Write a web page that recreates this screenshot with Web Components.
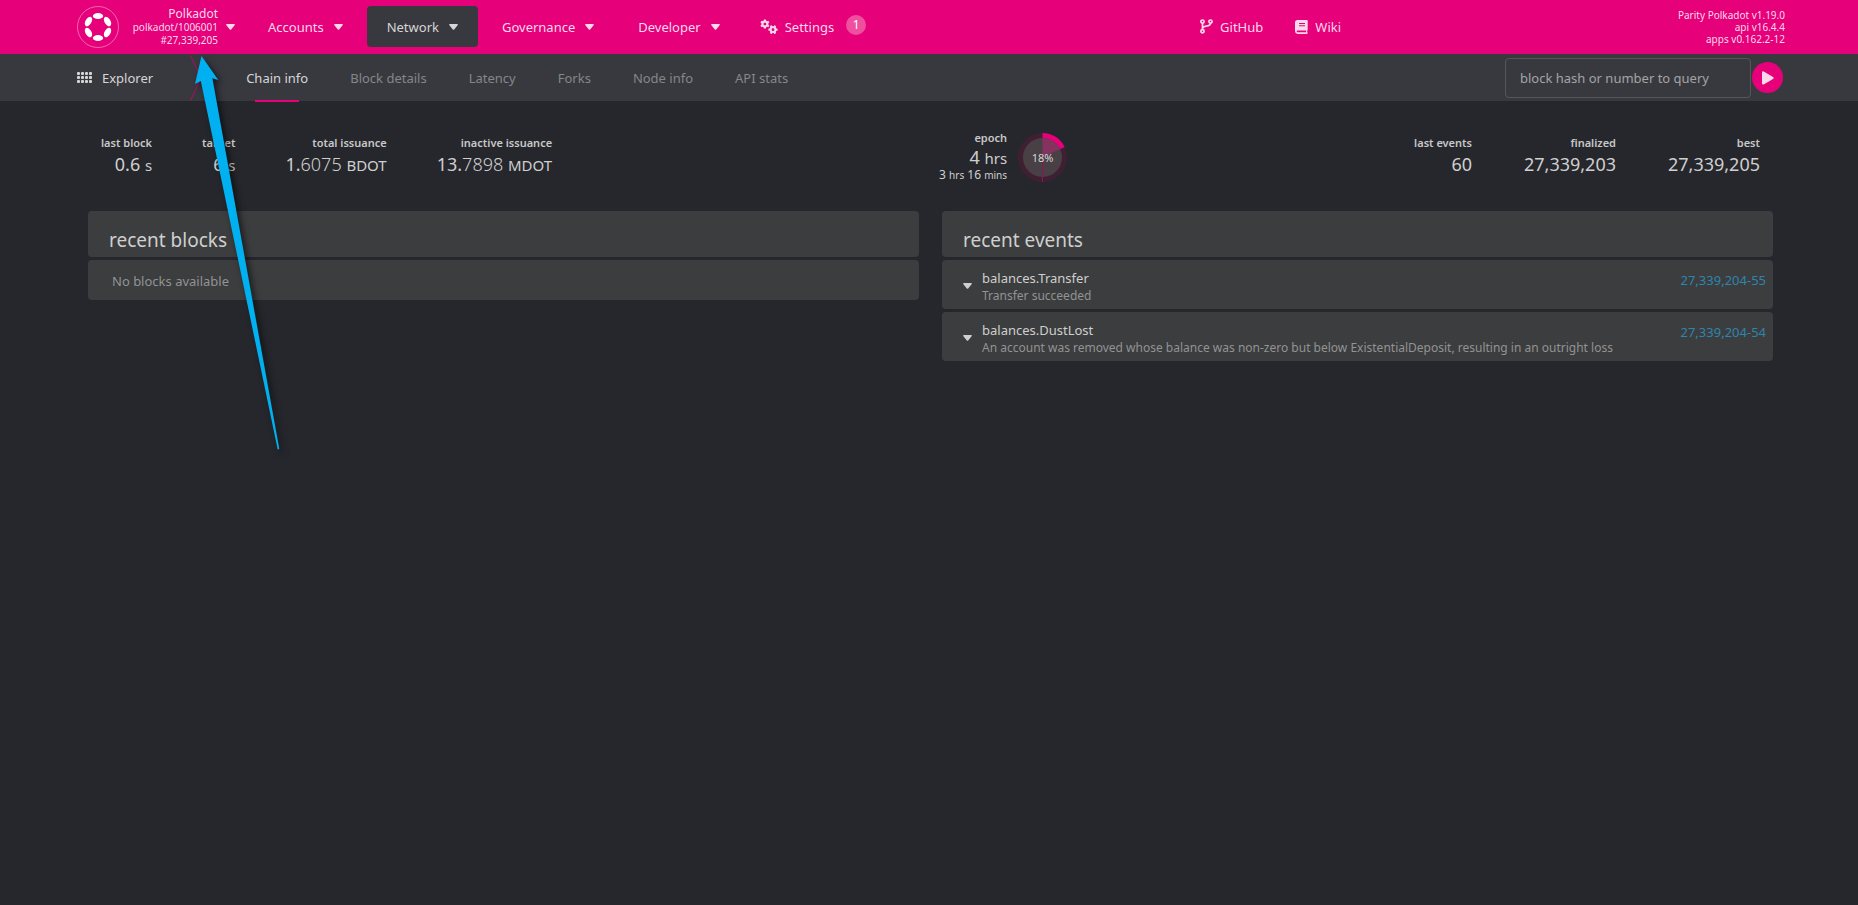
<!DOCTYPE html>
<html lang="en">
<head>
<meta charset="utf-8">
<title>Polkadot/Substrate Portal</title>
<style>
  html, body { margin: 0; background: #26272c; }
  body { font: 13px/18px "Noto Sans", "Open Sans", sans-serif; color: #cfcfcf; }
</style>
</head>
<body>
<portal-app></portal-app>

<script>
const define = (name, html, setup) => {
  const tpl = document.createElement('template');
  tpl.innerHTML = html;
  customElements.define(name, class extends HTMLElement {
    constructor() {
      super();
      this.attachShadow({ mode: 'open' }).append(tpl.content.cloneNode(true));
    }
    connectedCallback() { if (setup) setup(this, this.shadowRoot); }
  });
};

/* ---- icons ---- */
const gear = (cx, cy, start) => {
  let teeth = '';
  for (let i = 0; i < 6; i++) {
    teeth += `<rect x="${cx - 1.1}" y="${cy - 4.6}" width="2.2" height="3" rx=".4" transform="rotate(${start + i * 60} ${cx} ${cy})"/>`;
  }
  return `${teeth}<circle cx="${cx}" cy="${cy}" r="2.5" fill="none" stroke="currentColor" stroke-width="1.9"/>`;
};
const dots = () => {
  let out = '';
  for (const x of [0, 4, 8, 12]) for (const y of [0, 4, 8]) out += `<rect x="${x}" y="${y}" width="3" height="3" rx="1"/>`;
  return out;
};
const petals = () => {
  let out = '<circle cx="21" cy="21" r="20.5" fill="none" stroke="#fff" stroke-opacity=".4"/>';
  for (let i = 0; i < 6; i++) out += `<ellipse cx="21" cy="10" rx="5.2" ry="3" fill="#fff" transform="rotate(${i * 60} 21 21)"/>`;
  return out;
};
const ICONS = {
  caret: [9, 6, '<path d="M.8 0h7.4q1.2.2.4 1.2L5.2 5.5q-.7.7-1.4 0L.4 1.200Q-.4.2.8 0z"/>'],
  gears: [18, 16, gear(4.900, 5, 0) + gear(13, 10.600, 30)],
  grid: [15, 11, dots()],
  logo: [42, 42, petals()],
  branch: [13, 15, '<g fill="none" stroke="currentColor" stroke-width="1.7"><circle cx="2.500" cy="2.600" r="1.600"/><circle cx="2.500" cy="12.200" r="1.600"/><circle cx="10.500" cy="2.600" r="1.600"/><path d="M2.500 4.300v6.200M10.500 4.300c0 4.300-7.800 1.600-7.800 4.900"/></g>'],
  book: [13, 14, '<path fill-rule="evenodd" d="M2.500 0H12q.7 0 .7.700v9q0 .6-.5.900v1.700q.5.100.5.800t-.7.800H2.500Q0 13.700 0 11.300V2.500Q0 0 2.500 0zM4 3v1h6V3zM4 5.200v1h6v-1zM2.600 10.500q-.9.200-.9.900t.9.900h8.500v-1.800z"/>'],
  play: [12, 14, '<path d="M0 1.500Q.1-.2 1.700.6l9.300 5.300q1.400 1 0 2.100L1.700 13.400Q.1 14 0 12.400z"/>']
};
define('app-icon', `
  <style>
    :host { display: inline-block; flex: none; line-height: 0; }
    svg { display: block; fill: currentColor; }
  </style>
  <svg aria-hidden="true"></svg>`,
  (el, root) => {
    const [w, h, body] = ICONS[el.getAttribute('name')];
    const svg = root.querySelector('svg');
    svg.setAttribute('width', w);
    svg.setAttribute('height', h);
    svg.setAttribute('viewBox', `0 0 ${w} ${h}`);
    svg.innerHTML = body;
  });

/* ---- top bar ---- */
define('menu-item', `
  <style>
    :host { display: block; }
    button { display: flex; align-items: center; gap: 10px; height: 41px; margin: 0; padding: 0 20px; border: 0;
      border-radius: 4px; background: none; color: inherit; font: inherit; cursor: pointer; }
    :host([active]) button { background: #38393f; color: #d6d6d6; }
  </style>
  <button type="button" aria-haspopup="menu"><slot></slot><app-icon name="caret"></app-icon></button>`);

define('bar-link', `
  <style>
    :host { display: block; }
    a { display: flex; align-items: center; gap: 7px; color: inherit; text-decoration: none; }
  </style>
  <a href="#"><slot name="icon"></slot><slot></slot><slot name="badge"></slot></a>`);

define('chain-info', `
  <style>
    :host { display: block; }
    button { display: flex; align-items: center; gap: 8px; margin: 0; padding: 0; border: 0; background: none;
      color: inherit; font: 10px/13px "Noto Sans", "Open Sans", sans-serif; text-align: right; cursor: pointer; }
    .lines { width: 91px; white-space: nowrap; }
    .lines div:first-child { font-size: 12px; line-height: 14px; }
  </style>
  <button type="button">
    <app-icon name="logo"></app-icon>
    <div class="lines"><div>Polkadot</div><div>polkadot/1006001</div><div>#27,339,205</div></div>
    <app-icon name="caret"></app-icon>
  </button>`);

define('top-bar', `
  <style>
    :host { display: flex; justify-content: space-between; align-items: center; box-sizing: border-box; height: 54px;
      padding: 0 73px 1px 77px; background: #e6007a; color: #fbd9ea; }
    nav, .media { display: flex; align-items: center; }
    nav { gap: 4px; }
    chain-info { margin-right: 9px; }
    .media { gap: 32px; }
    .settings { margin-left: 16px; }
    .badge { width: 20px; height: 20px; margin: -4px 0 0 5px; border-radius: 10px; background: #ef4f9f; color: #fff;
      font-size: 12px; line-height: 20px; text-align: center; }
    .versions { min-width: 110px; font-size: 10px; line-height: 12px; text-align: right; }
  </style>
  <nav aria-label="Main">
    <chain-info></chain-info>
    <menu-item>Accounts</menu-item>
    <menu-item active>Network</menu-item>
    <menu-item>Governance</menu-item>
    <menu-item>Developer</menu-item>
    <bar-link class="settings"><app-icon slot="icon" name="gears"></app-icon>Settings<span slot="badge" class="badge">1</span></bar-link>
  </nav>
  <div class="media">
    <bar-link><app-icon slot="icon" name="branch"></app-icon>GitHub</bar-link>
    <bar-link><app-icon slot="icon" name="book"></app-icon>Wiki</bar-link>
  </div>
  <div class="versions"><div>Parity Polkadot v1.19.0</div><div>api v16.4.4</div><div>apps v0.162.2-12</div></div>`);

/* ---- tab bar ---- */
define('tab-link', `
  <style>
    :host { display: block; color: #85868a; }
    :host([active]) { color: #d6d6d6; }
    a { display: block; padding: 0 21px; line-height: 48px; color: inherit; text-decoration: none; }
    :host([active]) a { position: relative; }
    :host([active]) a::after { content: ""; position: absolute; left: 30px; right: 30px; bottom: 0; height: 2px; background: #e6007a; }
  </style>
  <a href="#"><slot></slot></a>`);

define('block-query', `
  <style>
    :host { display: block; }
    form { display: flex; align-items: center; gap: 1px; margin: 0; }
    input { box-sizing: border-box; width: 246px; height: 40px; margin: 0; padding: 0 14px; border: 1px solid #55565b;
      border-radius: 4px; background: none; color: #cfcfcf; font: inherit; }
    input::placeholder { color: #a3a4a6; opacity: 1; }
    button { display: flex; align-items: center; justify-content: center; width: 31px; height: 31px; margin: 0; padding: 0;
      border: 0; border-radius: 50%; background: #e6007a; color: #fbd9ea; cursor: pointer; }
  </style>
  <form>
    <input type="text" placeholder="block hash or number to query" aria-label="block hash or number to query">
    <button type="button" aria-label="Query"><app-icon name="play"></app-icon></button>
  </form>`);

define('tab-bar', `
  <style>
    :host { display: flex; align-items: center; height: 47px; padding: 0 75px 0 77px; background: #38393f; }
    .title { display: flex; align-items: center; gap: 10px; color: #d6d6d6; }
    .chevron { display: block; margin: 0 23px 0 37px; fill: none; stroke: #b00c68; }
    nav { display: flex; flex: 1; }
  </style>
  <div class="title"><app-icon name="grid"></app-icon>Explorer</div>
  <svg class="chevron" width="12" height="46" viewBox="0 0 12 46" aria-hidden="true"><path d="M.5.500 11 23 .5 45.500"/></svg>
  <nav aria-label="Explorer">
    <tab-link active>Chain info</tab-link>
    <tab-link>Block details</tab-link>
    <tab-link>Latency</tab-link>
    <tab-link>Forks</tab-link>
    <tab-link>Node info</tab-link>
    <tab-link>API stats</tab-link>
  </nav>
  <block-query></block-query>`);

/* ---- summary ---- */
define('summary-stat', `
  <style>
    :host { display: block; padding-bottom: 3px; text-align: right; white-space: nowrap; }
    .label { font-size: 11px; line-height: 16px; font-weight: 600; color: #c8c8c8; }
    .value { font-size: 18px; line-height: 26px; }
    ::slotted(small) { font-size: 15px; line-height: 1; }
    ::slotted(i) { font-style: normal; font-weight: 300; }
  </style>
  <div class="label"><slot name="label"></slot></div>
  <div class="value"><slot></slot></div>`);

define('epoch-stat', `
  <style>
    :host { display: flex; align-items: center; gap: 11px; }
    .text { padding-bottom: 5px; text-align: right; white-space: nowrap; }
    .label { font-size: 11px; line-height: 17px; font-weight: 600; color: #c8c8c8; }
    .total { font-size: 18px; line-height: 22px; }
    .total small { font-size: 15px; line-height: 1; }
    .left { font-size: 12px; line-height: 14px; }
    .left small { font-size: 10px; line-height: 1; }
    svg { display: block; }
    text { font-size: 11px; fill: #d6d6d6; }
  </style>
  <div class="text">
    <div class="label">epoch</div>
    <div class="total">4 <small>hrs</small></div>
    <div class="left">3 <small>hrs</small> 16 <small>mins</small></div>
  </div>
  <svg width="49" height="49" viewBox="0 0 49 49" role="img" aria-label="18%">
    <circle cx="24.500" cy="24.500" r="24.500" fill="#3f2033"/>
    <path d="M24.500 24.500V0A24.500 24.500 0 0 1 46.600 14z" fill="#e6007a"/>
    <circle cx="24.500" cy="24.500" r="19.500" fill="#484044"/>
    <path d="M24.500 24.500V5A19.500 19.500 0 0 1 42.100 16z" fill="#84325e"/>
    <path d="M24.500 24.500V49" stroke="#8c1458"/>
    <text x="24.500" y="28.500" text-anchor="middle">18%</text>
  </svg>`);

define('summary-bar', `
  <style>
    :host { display: flex; justify-content: space-between; align-items: center; height: 113px; padding: 0 98px 0 101px; }
    section { display: flex; align-items: center; }
    .chain { gap: 50px; }
    .epoch { margin-left: 40px; }
    .blocks { gap: 52px; }
  </style>
  <section class="chain">
    <summary-stat><span slot="label">last block</span>0.6 <small>s</small></summary-stat>
    <summary-stat><span slot="label">target</span>6 <small>s</small></summary-stat>
    <summary-stat><span slot="label">total issuance</span>1.<i>6075</i> <small>BDOT</small></summary-stat>
    <summary-stat><span slot="label">inactive issuance</span>13.<i>7898</i> <small>MDOT</small></summary-stat>
  </section>
  <section class="epoch"><epoch-stat></epoch-stat></section>
  <section class="blocks">
    <summary-stat><span slot="label">last events</span>60</summary-stat>
    <summary-stat><span slot="label">finalized</span>27,339,203</summary-stat>
    <summary-stat><span slot="label">best</span>27,339,205</summary-stat>
  </section>`);

/* ---- tables ---- */
const TABLE_CSS = `
    :host { display: block; min-width: 0; }
    table { width: 100%; border-collapse: separate; border-spacing: 0 3px; }
    th, td { padding: 0; background: #3c3d3e; font-weight: 400; text-align: left; }
    th { height: 46px; padding-left: 21px; border-radius: 4px; font-size: 19px; line-height: 24px; vertical-align: bottom; }
    th span { display: block; padding-bottom: 5px; }`;

define('recent-blocks', `
  <style>${TABLE_CSS}
    td { height: 38px; padding: 2px 0 0 24px; border-radius: 4px; color: #929394; }
  </style>
  <table>
    <thead><tr><th scope="col"><span>recent blocks</span></th></tr></thead>
    <tbody><tr><td>No blocks available</td></tr></tbody>
  </table>`);

const EVENTS = [
  ['balances.Transfer', 'Transfer succeeded', '27,339,204-55'],
  ['balances.DustLost', 'An account was removed whose balance was non-zero but below ExistentialDeposit, resulting in an outright loss', '27,339,204-54']
];
define('recent-events', `
  <style>${TABLE_CSS}
    td { height: 49px; vertical-align: middle; }
    td:first-child { width: 40px; border-radius: 4px 0 0 4px; }
    td:last-child { width: 100px; padding-right: 7px; border-radius: 0 4px 4px 0; text-align: right; vertical-align: top; }
    button { display: block; margin: 0 0 0 21px; padding: 0; border: 0; background: none; color: #cfcfcf; cursor: pointer; }
    .name { padding-top: 4px; }
    .desc { color: #929394; font-size: 12px; line-height: 18px; }
    a { display: block; padding-top: 11px; color: #2d85ad; text-decoration: none; }
  </style>
  <table>
    <thead><tr><th scope="col" colspan="3"><span>recent events</span></th></tr></thead>
    <tbody></tbody>
  </table>`,
  (el, root) => {
    root.querySelector('tbody').innerHTML = EVENTS.map(([name, desc, id]) => `
      <tr>
        <td><button type="button" aria-label="Expand ${name}"><app-icon name="caret"></app-icon></button></td>
        <td><div class="name">${name}</div><div class="desc">${desc}</div></td>
        <td><a href="#">${id}</a></td>
      </tr>`).join('');
  });

/* ---- annotation arrow drawn over the page ---- */
define('pointer-arrow', `
  <style>
    :host { position: absolute; left: 190px; top: 50px; pointer-events: none; }
    svg { display: block; overflow: visible; filter: drop-shadow(3px 3px 3px rgba(0, 0, 0, .6)); }
  </style>
  <svg width="92" height="402" viewBox="0 0 92 402" aria-hidden="true">
    <path fill="#00b0f0" d="M11.500 6 28.300 30 22.400 28.300 89.300 399 87.700 399.400 10.800 31 5 34z"/>
  </svg>`);

define('portal-app', `
  <style>
    :host { display: block; position: relative; min-height: 100vh; }
    main { display: grid; grid-template-columns: minmax(0, 1fr) minmax(0, 1fr); align-items: start; gap: 23px;
      margin: -6px 0 0; padding: 0 85px 0 88px; }
  </style>
  <header>
    <top-bar></top-bar>
    <tab-bar></tab-bar>
  </header>
  <summary-bar></summary-bar>
  <main>
    <recent-blocks></recent-blocks>
    <recent-events></recent-events>
  </main>
  <pointer-arrow></pointer-arrow>`);
</script>
</body>
</html>
